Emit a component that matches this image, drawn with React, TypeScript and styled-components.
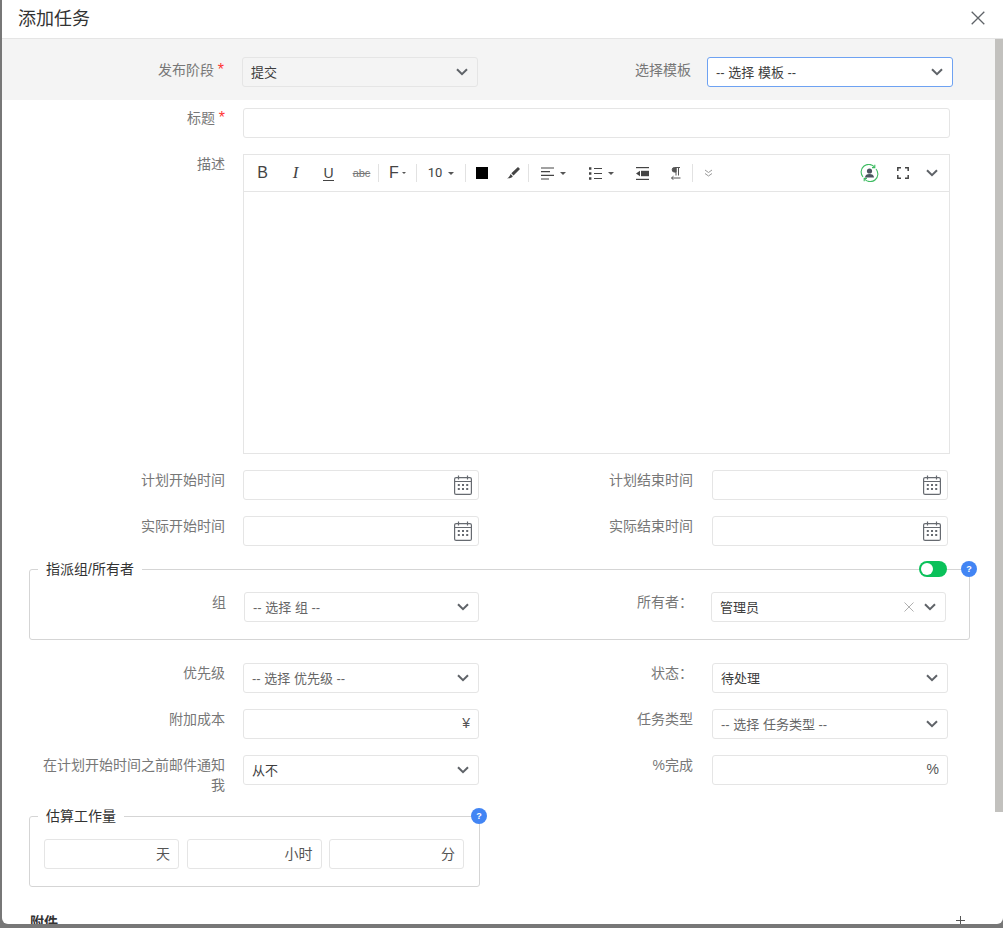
import React from "react";
import styled, { createGlobalStyle } from "styled-components";

const GlobalStyle = createGlobalStyle`
    html, body {
        margin: 0;
        padding: 0;
        background: #777;
    }
    * {
        box-sizing: border-box;
    }
`;

const Page = styled.div`
    height: 928px;
    padding: 0 0 4px 2px;
    overflow: hidden;
    font-family: "Liberation Sans", "Noto Sans CJK SC", sans-serif;
    font-size: 13px;
    color: #333;
`;
const Modal = styled.div`
    height: 100%;
    display: flex;
    flex-direction: column;
    background: #fff;
    border-radius: 0 0 6px 6px;
    overflow: hidden;
`;
const Header = styled.header`
    flex: none;
    height: 39px;
    display: flex;
    align-items: center;
    justify-content: space-between;
    padding: 0 18px 3px 16px;
    border-bottom: 1px solid #e5e5e5;
`;
const Title = styled.h4`
    margin: 0 0 1px;
    font-size: 18px;
    font-weight: 400;
    color: #333;
`;
const Body = styled.div`
    flex: 1;
    min-height: 0;
    display: flex;
`;
const Content = styled.div`
    flex: 1;
    min-width: 0;
    overflow: hidden;
`;
const ScrollTrack = styled.div`
    flex: none;
    width: 8px;
`;
const ScrollThumb = styled.div`
    height: 773px;
    background: #c2c1be;
`;
const TopBand = styled.div`
    height: 61px;
    padding-top: 18px;
    display: flex;
    background: #f4f4f4;
`;
const Form = styled.div<{ $pt: number }>`
    padding-top: ${({ $pt }) => $pt}px;
    display: flex;
    flex-direction: column;
    gap: 16px;
`;
const Row = styled.div`
    display: flex;
    align-items: flex-start;
`;
const Label = styled.label<{ $w: number; $pr?: number; $pt?: number }>`
    flex: none;
    width: ${({ $w }) => $w}px;
    padding: ${({ $pt }) => $pt ?? 0}px ${({ $pr }) => $pr ?? 18}px 0 38px;
    text-align: right;
    font-size: 14px;
    line-height: 20px;
    color: #777;
`;
const Star = styled.span`
    display: inline-block;
    width: 10px;
    text-align: right;
    font-size: 16px;
    line-height: 14px;
    color: #f33;
`;
const SelectBox = styled.div<{ $w: number; $tone?: "band" | "focus" }>`
    flex: none;
    width: ${({ $w }) => $w}px;
    height: 30px;
    padding: 0 9px 0 8px;
    display: flex;
    align-items: center;
    justify-content: space-between;
    border: 1px solid ${({ $tone }) => ($tone === "focus" ? "#6ea2f2" : "#e5e5e5")};
    border-radius: 3px;
    background: ${({ $tone }) => ($tone === "band" ? "#f4f4f4" : "#fff")};
`;
const SelectText = styled.span<{ $muted?: boolean }>`
    margin-bottom: 2px;
    color: ${({ $muted }) => ($muted ? "#666" : "#3d3d3d")};
`;
const SelectIcons = styled.span`
    display: flex;
    align-items: center;
    gap: 10px;
`;
const InputBox = styled.div<{ $w?: number }>`
    flex: none;
    width: ${({ $w }) => ($w ? `${$w}px` : "auto")};
    height: 30px;
    padding: 0 8px 0 0;
    display: flex;
    align-items: center;
    border: 1px solid #e5e5e5;
    border-radius: 3px;
    background: #fff;
`;
const Input = styled.input`
    flex: 1;
    min-width: 0;
    height: 100%;
    padding: 0 8px;
    border: 0;
    outline: 0;
    background: transparent;
    font: inherit;
`;
const Suffix = styled.span`
    flex: none;
    margin-bottom: 2px;
    font-size: 14px;
    color: #555;
`;
const CalendarWrap = styled.span`
    display: flex;
    margin-right: -2px;
`;
const TitleBox = styled(InputBox)`
    width: 707px;
`;
const Editor = styled.div`
    flex: none;
    width: 707px;
    height: 300px;
    border: 1px solid #e5e5e5;
`;
const Toolbar = styled.div`
    height: 37px;
    padding-left: 2px;
    display: flex;
    align-items: center;
    border-bottom: 1px solid #e5e5e5;
    color: #444;
`;
const ToolButton = styled.span<{ $w?: number; $gap?: number }>`
    flex: none;
    width: ${({ $w }) => $w ?? 33}px;
    height: 20px;
    display: flex;
    align-items: center;
    justify-content: center;
    gap: ${({ $gap }) => $gap ?? 6}px;
    font-size: 15px;
    line-height: 20px;
`;
const Bold = styled.span`
    font-family: "Liberation Sans", sans-serif;
    font-size: 16px;
`;
const Italic = styled(Bold)`
    font-style: italic;
    font-size: 17px;
    font-family: "Liberation Serif", serif;
`;
const Under = styled(Bold)`
    font-size: 14px;
    line-height: 14px;
    border-bottom: 1.5px solid #444;
`;
const Strike = styled.span`
    font-size: 11px;
    color: #777;
    text-decoration: line-through;
`;
const Size = styled.span`
    font-size: 13px;
    font-family: Roboto, sans-serif;
`;
const Separator = styled.span`
    flex: none;
    width: 1px;
    height: 18px;
    background: #e2e2e2;
`;
const Caret = styled.span`
    width: 0;
    height: 0;
    border: 3px solid transparent;
    border-top-color: #555;
    border-bottom: 0;
`;
const SmallCaret = styled(Caret)`
    border-width: 2px;
    border-bottom: 0;
`;
const ColorSquare = styled.span`
    width: 12px;
    height: 12px;
    background: #000;
`;
const Spacer = styled.span`
    flex: 1;
`;
const Group = styled.fieldset<{ $w: number; $mt: number }>`
    position: relative;
    width: ${({ $w }) => $w}px;
    min-width: 0;
    margin: ${({ $mt }) => $mt}px 0 0 27px;
    padding: 13px 0 17px;
    border: 1px solid #d5d5d5;
    border-radius: 3px;
`;
const Legend = styled.legend`
    margin-left: 8px;
    padding: 0 8px;
    height: 20px;
    line-height: 20px;
    font-size: 14px;
    color: #333;
`;
const GroupFields = styled.div`
    padding-left: 14px;
    display: flex;
    gap: 7.5px;
`;
const Help = styled.span`
    position: absolute;
    top: -18px;
    right: -8px;
    width: 16px;
    height: 16px;
    display: flex;
    align-items: center;
    justify-content: center;
    border-radius: 50%;
    background: #4285f4;
    color: #fff;
    font-size: 9px;
    font-weight: 700;
`;
const Toggle = styled.span`
    position: absolute;
    top: -18px;
    right: 22px;
    width: 28px;
    height: 16px;
    padding: 2px;
    border-radius: 8px;
    background: #0ac15a;
`;
const Knob = styled.span`
    display: block;
    width: 12px;
    height: 12px;
    border-radius: 50%;
    background: #fff;
`;
const Attachments = styled.div`
    margin: 25px 27px 0 28px;
    display: flex;
    align-items: flex-start;
    justify-content: space-between;
    font-size: 14px;
    font-weight: 700;
    line-height: 20px;
    color: #333;
`;
const PlusWrap = styled.span`
    display: flex;
    padding: 4px 3px 0 0;
`;

const Chevron = () => (
    <svg width="12" height="8" viewBox="0 0 12 8" fill="none" stroke="#5f6368" strokeWidth="2">
        <path d="M1 1.200 6 6.200l5-5" />
    </svg>
);

const Calendar = () => (
    <CalendarWrap>
        <svg width="18" height="20" viewBox="0 0 18 20" fill="none" stroke="#666a70" strokeWidth="1.2">
            <rect x="0.6" y="2.6" width="16.8" height="16.8" rx="1.5" />
            <path d="M.6 6.5h16.8M4.5 .5v4M13.5 .5v4" />
            <g fill="#666a70" stroke="none">
                <rect x="3.8" y="9" width="2" height="2" />
                <rect x="8" y="9" width="2" height="2" />
                <rect x="12.2" y="9" width="2" height="2" />
                <rect x="3.8" y="13" width="2" height="2" />
                <rect x="8" y="13" width="2" height="2" />
                <rect x="12.2" y="13" width="2" height="2" />
            </g>
        </svg>
    </CalendarWrap>
);

const Close = ({ size = 14, color = "#5f6368" }: { size?: number; color?: string }) => (
    <svg width={size} height={size} viewBox="0 0 14 14" fill="none" stroke={color} strokeWidth="1.3">
        <path d="M.7.7l12.6 12.6M13.3.7.7 13.3" />
    </svg>
);

const Pen = () => (
    <svg width="13" height="12" viewBox="0 0 13 12" fill="#444">
        <path d="M11 0l2 2-6.5 6.5-2.2-2.2zM3.6 7l2.2 2.2C5 10.800 2.500 11.500 0 11.500 1.500 10.500 2.800 9.500 3.600 7z" />
    </svg>
);

const AlignIcon = () => (
    <svg width="13" height="13" viewBox="0 0 13 13" stroke="#444" strokeWidth="1.2">
        <path d="M0 1h13M0 4.700h9M0 8.300h13M0 12h8" />
    </svg>
);

const ListIcon = () => (
    <svg width="13" height="13" viewBox="0 0 13 13" stroke="#444" strokeWidth="1.2">
        <path d="M5 1.500h8M5 6.500h8M5 11.500h8" />
        <path d="M0 1.500h2.400M0 6.500h2.400M0 11.500h2.400" strokeWidth="2.400" />
    </svg>
);

const OutdentIcon = () => (
    <svg width="13" height="13" viewBox="0 0 13 13" fill="#444">
        <rect width="13" height="1.200" />
        <rect y="11.800" width="13" height="1.200" />
        <rect x="5" y="3.800" width="8" height="5.400" />
        <path d="M4 3.800v5.400L0 6.500z" />
    </svg>
);

const ParagraphIcon = () => (
    <svg width="10" height="13" viewBox="0 0 10 13" fill="#555" stroke="#555" strokeWidth="1">
        <path d="M5 .5H3.500a2.300 2.300 0 0 0 0 4.600H5zM5 .5v8M7.500 .5v8M4 .5h5" />
        <path d="M.5 11h9M2.500 9.200l-2 1.800 2 1.800" fill="none" />
    </svg>
);

const DoubleChevron = () => (
    <svg width="9" height="8" viewBox="0 0 9 8" fill="none" stroke="#999" strokeWidth="1">
        <path d="M1 1l3.500 2.500L8 1M1 4.500 4.500 7 8 4.500" />
    </svg>
);

const UserSync = () => (
    <svg width="19" height="18" viewBox="0 0 19 18" fill="none">
        <path d="M3 13A7.600 7.600 0 0 1 14.500 3M16 5a7.600 7.600 0 0 1-11.500 10" stroke="#3ebc62" strokeWidth="1.100" />
        <path d="M14.800 .8v2.800H12M4.200 17.200v-2.800H7" stroke="#3ebc62" strokeWidth="1.100" />
        <circle cx="9.500" cy="7" r="2.600" fill="#4b5560" />
        <path d="M5 13.500c0-2.500 2-3.500 4.500-3.500s4.500 1 4.500 3.500z" fill="#4b5560" />
    </svg>
);

const Fullscreen = () => (
    <svg width="12" height="12" viewBox="0 0 12 12" fill="none" stroke="#444" strokeWidth="1.500">
        <path d="M.8 4V.8H4M8 .8h3.200V4M11.200 8v3.200H8M4 11.200H.8V8" />
    </svg>
);

const Plus = () => (
    <svg width="9" height="9" viewBox="0 0 9 9" stroke="#555" strokeWidth="1">
        <path d="M0 4.500h9M4.500 0v9" />
    </svg>
);

const DateField = () => (
    <InputBox $w={236}>
        <Input />
        <Calendar />
    </InputBox>
);

const Select: React.FC<{
    w: number;
    text: string;
    muted?: boolean;
    tone?: "band" | "focus";
}> = ({ w, text, muted, tone }) => (
    <SelectBox $w={w} $tone={tone}>
        <SelectText $muted={muted}>{text}</SelectText>
        <Chevron />
    </SelectBox>
);

const App: React.FC = () => (
    <Page>
        <GlobalStyle />
        <Modal>
            <Header>
                <Title>添加任务</Title>
                <Close />
            </Header>
            <Body>
                <Content>
                    <TopBand>
                        <Label $w={240} $pt={3}>发布阶段<Star>*</Star></Label>
                        <Select w={236} text="提交" tone="band" />
                        <Label $w={229} $pr={16} $pt={3}>选择模板</Label>
                        <Select w={246} text="-- 选择 模板 --" tone="focus" />
                    </TopBand>
                    <Form $pt={8}>
                        <Row>
                            <Label $w={241}>标题<Star>*</Star></Label>
                            <TitleBox>
                                <Input />
                            </TitleBox>
                        </Row>
                        <Row>
                            <Label $w={241}>描述</Label>
                            <Editor>
                                <Toolbar>
                                    <ToolButton><Bold>B</Bold></ToolButton>
                                    <ToolButton><Italic>I</Italic></ToolButton>
                                    <ToolButton><Under>U</Under></ToolButton>
                                    <ToolButton><Strike>abc</Strike></ToolButton>
                                    <Separator />
                                    <ToolButton $w={37} $gap={3}><Bold>F</Bold><SmallCaret /></ToolButton>
                                    <Separator />
                                    <ToolButton $w={48}><Size>10</Size><Caret /></ToolButton>
                                    <Separator />
                                    <ToolButton $w={32}><ColorSquare /></ToolButton>
                                    <ToolButton $w={30}><Pen /></ToolButton>
                                    <Separator />
                                    <ToolButton $w={48}><AlignIcon /><Caret /></ToolButton>
                                    <ToolButton $w={49}><ListIcon /><Caret /></ToolButton>
                                    <ToolButton><OutdentIcon /></ToolButton>
                                    <ToolButton><ParagraphIcon /></ToolButton>
                                    <Separator />
                                    <ToolButton $w={31}><DoubleChevron /></ToolButton>
                                    <Spacer />
                                    <ToolButton $w={44}><UserSync /></ToolButton>
                                    <ToolButton $w={24}><Fullscreen /></ToolButton>
                                    <ToolButton $w={34}><Chevron /></ToolButton>
                                </Toolbar>
                            </Editor>
                        </Row>
                        <Row>
                            <Label $w={241}>计划开始时间</Label>
                            <DateField />
                            <Label $w={233} $pr={19}>计划结束时间</Label>
                            <DateField />
                        </Row>
                        <Row>
                            <Label $w={241}>实际开始时间</Label>
                            <DateField />
                            <Label $w={233} $pr={19}>实际结束时间</Label>
                            <DateField />
                        </Row>
                    </Form>
                    <Group $w={941} $mt={13}>
                        <Legend>指派组/所有者</Legend>
                        <Toggle><Knob /></Toggle>
                        <Help>?</Help>
                        <Row>
                            <Label $w={214}>组</Label>
                            <Select w={235} text="-- 选择 组 --" muted />
                            <Label $w={232}>所有者：</Label>
                            <SelectBox $w={235}>
                                <SelectText>管理员</SelectText>
                                <SelectIcons>
                                    <Close size={10} color="#aaa" />
                                    <Chevron />
                                </SelectIcons>
                            </SelectBox>
                        </Row>
                    </Group>
                    <Form $pt={23}>
                        <Row>
                            <Label $w={241}>优先级</Label>
                            <Select w={236} text="-- 选择 优先级 --" muted />
                            <Label $w={233} $pr={19}>状态：</Label>
                            <Select w={236} text="待处理" />
                        </Row>
                        <Row>
                            <Label $w={241}>附加成本</Label>
                            <InputBox $w={236}>
                                <Input />
                                <Suffix>¥</Suffix>
                            </InputBox>
                            <Label $w={233} $pr={19}>任务类型</Label>
                            <Select w={236} text="-- 选择 任务类型 --" muted />
                        </Row>
                        <Row>
                            <Label $w={241}>在计划开始时间之前邮件通知我</Label>
                            <Select w={236} text="从不" />
                            <Label $w={233} $pr={19}>%完成</Label>
                            <InputBox $w={236}>
                                <Input />
                                <Suffix>%</Suffix>
                            </InputBox>
                        </Row>
                    </Form>
                    <Group $w={451} $mt={11}>
                        <Legend>估算工作量</Legend>
                        <Help>?</Help>
                        <GroupFields>
                            <InputBox $w={135}><Input /><Suffix>天</Suffix></InputBox>
                            <InputBox $w={135}><Input /><Suffix>小时</Suffix></InputBox>
                            <InputBox $w={135}><Input /><Suffix>分</Suffix></InputBox>
                        </GroupFields>
                    </Group>
                    <Attachments>
                        <span>附件</span>
                        <PlusWrap><Plus /></PlusWrap>
                    </Attachments>
                </Content>
                <ScrollTrack>
                    <ScrollThumb />
                </ScrollTrack>
            </Body>
        </Modal>
    </Page>
);

export default App;
